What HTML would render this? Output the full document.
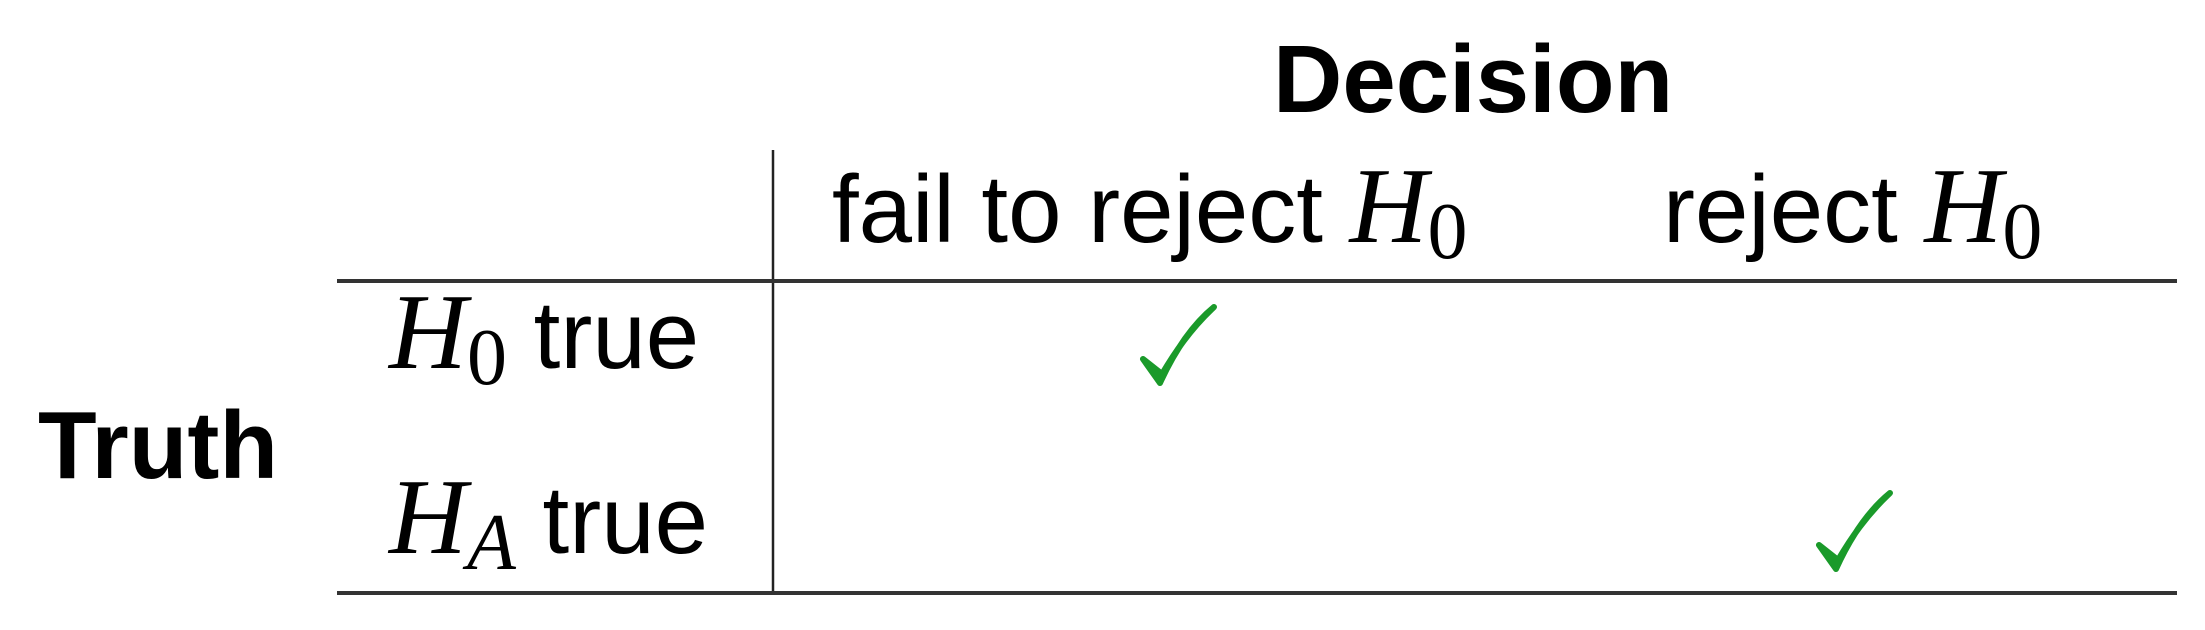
<!DOCTYPE html>
<html><head><meta charset="utf-8"><style>
html,body{margin:0;padding:0;background:#fff;width:2205px;height:630px;overflow:hidden}
</style></head><body>
<svg width="2205" height="630" viewBox="0 0 2205 630" xmlns="http://www.w3.org/2000/svg">
<g font-family="Liberation Sans, Arial, sans-serif" font-size="96" fill="#000">
<text x="1273" y="112" font-weight="bold">Decision</text>
<text x="832" y="242">fail to reject <tspan font-family="Liberation Serif, serif" font-style="italic" font-size="108">H</tspan><tspan font-family="Liberation Serif, serif" font-size="80" dy="16">0</tspan></text>
<text x="1663" y="242">reject <tspan font-family="Liberation Serif, serif" font-style="italic" font-size="108">H</tspan><tspan font-family="Liberation Serif, serif" font-size="80" dy="16">0</tspan></text>
<text x="389" y="368"><tspan font-family="Liberation Serif, serif" font-style="italic" font-size="108">H</tspan><tspan font-family="Liberation Serif, serif" font-size="80" dy="16">0</tspan><tspan dy="-16"> true</tspan></text>
<text x="38" y="478" font-weight="bold">Truth</text>
<text x="389" y="553"><tspan font-family="Liberation Serif, serif" font-style="italic" font-size="108">H</tspan><tspan font-family="Liberation Serif, serif" font-style="italic" font-size="80" dy="16">A</tspan><tspan dy="-16"> true</tspan></text>
</g>
<line x1="773" y1="150" x2="773" y2="593" stroke="#222" stroke-width="2.5"/>
<line x1="337" y1="281" x2="2177" y2="281" stroke="#333" stroke-width="4"/>
<line x1="337" y1="593" x2="2177" y2="593" stroke="#333" stroke-width="4"/>
<path d="M1143 359 L1160 383 C1175 350 1192 325 1214 307 L1212 309 C1190 330 1175 352 1162 374 Z" fill="#1a9a2a" stroke="#1a9a2a" stroke-width="6" stroke-linejoin="round"/>
<path d="M1819 545 L1836 569 C1851 536 1868 511 1890 493 L1888 495 C1866 516 1851 538 1838 560 Z" fill="#1a9a2a" stroke="#1a9a2a" stroke-width="6" stroke-linejoin="round"/>
</svg>
</body></html>
